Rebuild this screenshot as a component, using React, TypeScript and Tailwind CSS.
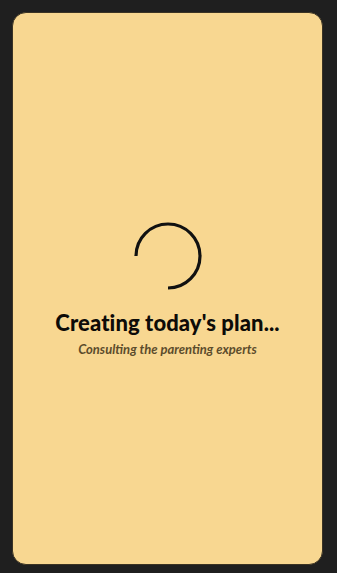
import React from "react";

function Spinner() {
  // arc from 9 o'clock, clockwise over the top, down to 6 o'clock
  return (
    <svg width="70" height="70" viewBox="0 0 70 70" fill="none" className="block">
      <path
        d="M 3 35 A 32 32 0 1 1 35 67"
        stroke="#111111"
        strokeWidth="3.2"
        strokeLinecap="butt"
      />
    </svg>
  );
}

export default function App() {
  return (
    <div className="w-[337px] h-[573px] bg-[#1f1f1f] pt-3 pl-3">
      <div className="w-[311px] h-[553px] rounded-[14px] bg-[#f8d791] border border-[#3b3323] flex flex-col items-center justify-center">
        <div className="mt-[2px]">
          <Spinner />
        </div>
        <h1 className="mt-[18px] text-[22px] leading-[28px] font-black text-[#0d0b08] tracking-[0.1px] font-['Lato',sans-serif]">
          Creating today's plan...
        </h1>
        <p className="mt-[3px] text-[13px] leading-[18px] italic font-bold text-[#5c4c2c] font-['Lato',sans-serif]">
          Consulting the parenting experts
        </p>
      </div>
    </div>
  );
}
